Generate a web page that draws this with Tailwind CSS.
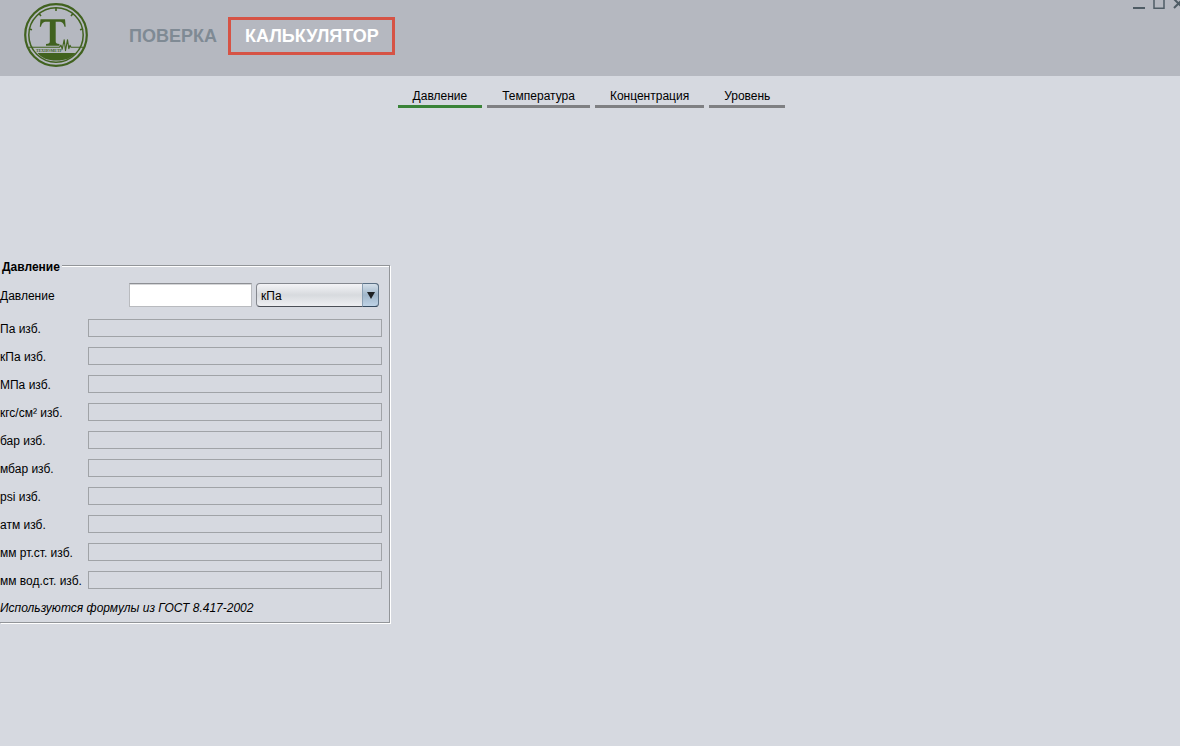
<!DOCTYPE html>
<html lang="ru">
<head>
  <meta charset="UTF-8">
  <meta name="viewport" content="width=device-width, initial-scale=1.0">
  <title>Калькулятор</title>
  <script src="https://cdn.jsdelivr.net/npm/@tailwindcss/browser@4"></script>
</head>
<body class="min-h-screen overflow-x-hidden bg-[#d6d9e0] font-['Liberation_Sans',Arial,sans-serif] text-xs text-black">
  <header class="flex h-19 items-start justify-between bg-[#b5b8c0]">
    <div class="flex items-start pl-6">
      <!-- logo -->
      <svg class="mt-[3px] size-16" viewBox="0 0 64 64" fill="none" stroke="#41621f">
        <circle cx="32" cy="32" r="30.8" stroke-width="2.2"/>
        <circle cx="32" cy="32" r="27.2" stroke-width="1.5"/>
        <path d="M32 5v3M15 10.500l2 2.500M49 10.500l-2 2.500M5 26l3 .8M59 26l-3 .8" stroke-width="1.6"/>
        <path d="M5 44.200h30.500l1.500-2 1.200 4 2-9.500 1.300 11 2-11 1.300 9 1.200-3.500 1 2h12" stroke-width="1.1" stroke-linejoin="round"/>
        <path d="M13.500 50h38c-4 5-10 7.500-19 7.500s-15-2.500-19-7.500z" fill="#41621f" stroke="none"/>
        <path d="M16.500 16.300h24.500l.7 7.400h-1.200c-.8-3.500-2-5-5.500-5h-3.300v19.500c0 2 .8 2.600 3.800 2.900v1.700H22v-1.700c3-.3 3.800-.9 3.800-2.900V18.700h-3.300c-3.500 0-4.700 1.500-5.500 5h-1.200z" fill="#41621f" stroke="none"/>
        <text x="12" y="49" font-size="4" font-weight="bold" font-family="Liberation Serif, serif" fill="#41621f" stroke="none">ТЕХНОМЕТР</text>
      </svg>
      <nav class="mt-[17px] ml-[38px] flex text-lg font-bold">
        <a href="#" class="flex h-[38px] items-center border-3 border-transparent pr-2 text-[#7f8a94]">ПОВЕРКА</a>
        <a href="#" class="flex h-[38px] items-center border-3 border-[#d65345] pr-[13px] pl-3.5 text-white">КАЛЬКУЛЯТОР</a>
      </nav>
    </div>
    <div class="flex overflow-hidden text-[#4f5c65]">
      <button type="button" aria-label="Свернуть" class="mr-2"><svg class="h-3 w-3" viewBox="0 0 12 12" fill="currentColor"><path d="M0 7h12v2H0z"/></svg></button>
      <button type="button" aria-label="Развернуть" class="mr-2"><svg class="h-3 w-3" viewBox="0 0 12 12" fill="none" stroke="currentColor" stroke-width="1.500"><path d="M1-2h10V8.200H1z"/></svg></button>
      <button type="button" aria-label="Закрыть" class="-mr-[5px]"><svg class="h-3 w-3" viewBox="0 0 12 12" fill="none" stroke="currentColor" stroke-width="2"><path d="M1-1l9 9M10-1L1 8"/></svg></button>
    </div>
  </header>

  <nav class="flex justify-center gap-[5px] pt-3 pl-[3px]">
    <a href="#" class="border-b-3 border-[#3a8338] px-[15px] pb-px">Давление</a>
    <a href="#" class="border-b-3 border-[#7f8083] px-[15px] pb-px">Температура</a>
    <a href="#" class="border-b-3 border-[#7f8083] px-[15px] pb-px">Концентрация</a>
    <a href="#" class="border-b-3 border-[#7f8083] px-[15px] pb-px">Уровень</a>
  </nav>

  <main class="pt-[147px]">
    <form>
      <fieldset class="w-[390px] border border-l-0 border-[#929599] pb-1.5 shadow-[1px_1px_0_#fff,inset_0_1px_0_#fff]">
        <legend class="bg-[#d6d9e0] px-0.5 pt-1 font-bold">Давление</legend>

        <div class="mt-2 flex h-6 items-center">
          <label for="value" class="w-[129px] pt-0.5">Давление</label>
          <input id="value" type="text" class="h-6 w-[123px] border border-[#b9bbbf] border-t-[#8d8f94] bg-white px-1 shadow-[inset_0_1px_0_#d5d6d8]">
          <div class="relative ml-1 w-[123px]">
            <select id="unit" aria-label="Единица измерения" class="block h-6 w-full appearance-none rounded border border-[#85888f] border-b-[#4b4f57] bg-linear-to-b from-[#f4f4f7] via-[#d7dade] to-[#eeeff2] pt-px pl-1">
              <option>кПа</option>
              <option>Па</option>
              <option>МПа</option>
              <option>бар</option>
            </select>
            <span class="pointer-events-none absolute inset-y-0 right-0 flex w-[17px] items-center justify-center rounded-r border border-[#5b7085] border-b-[#34495e] border-l-[#8ba0b4] bg-linear-to-b from-[#d5e0ea] via-[#a0b6ca] to-[#bfd3e6]">
              <svg class="h-[7px] w-2" viewBox="0 0 8 7" fill="#1d2023"><path d="M0 0h8L4 7z"/></svg>
            </span>
          </div>
        </div>

        <div class="mt-3 grid grid-cols-[88px_294px] items-center gap-y-2.5">
          <label for="pa" class="h-[18px] pt-0.5 whitespace-nowrap">Па изб.</label>
          <input id="pa" readonly class="h-[18px] border border-[#a0a3a7]">
          <label for="kpa" class="h-[18px] pt-0.5 whitespace-nowrap">кПа изб.</label>
          <input id="kpa" readonly class="h-[18px] border border-[#a0a3a7]">
          <label for="mpa" class="h-[18px] pt-0.5 whitespace-nowrap">МПа изб.</label>
          <input id="mpa" readonly class="h-[18px] border border-[#a0a3a7]">
          <label for="kgf" class="h-[18px] pt-0.5 whitespace-nowrap">кгс/см² изб.</label>
          <input id="kgf" readonly class="h-[18px] border border-[#a0a3a7]">
          <label for="bar" class="h-[18px] pt-0.5 whitespace-nowrap">бар изб.</label>
          <input id="bar" readonly class="h-[18px] border border-[#a0a3a7]">
          <label for="mbar" class="h-[18px] pt-0.5 whitespace-nowrap">мбар изб.</label>
          <input id="mbar" readonly class="h-[18px] border border-[#a0a3a7]">
          <label for="psi" class="h-[18px] pt-0.5 whitespace-nowrap">psi изб.</label>
          <input id="psi" readonly class="h-[18px] border border-[#a0a3a7]">
          <label for="atm" class="h-[18px] pt-0.5 whitespace-nowrap">атм изб.</label>
          <input id="atm" readonly class="h-[18px] border border-[#a0a3a7]">
          <label for="mmhg" class="h-[18px] pt-0.5 whitespace-nowrap">мм рт.ст. изб.</label>
          <input id="mmhg" readonly class="h-[18px] border border-[#a0a3a7]">
          <label for="mmh2o" class="h-[18px] pt-0.5 whitespace-nowrap">мм вод.ст. изб.</label>
          <input id="mmh2o" readonly class="h-[18px] border border-[#a0a3a7]">
        </div>

        <p class="mt-[11px] italic">Используются формулы из ГОСТ 8.417-2002</p>
      </fieldset>
    </form>
  </main>
</body>
</html>
